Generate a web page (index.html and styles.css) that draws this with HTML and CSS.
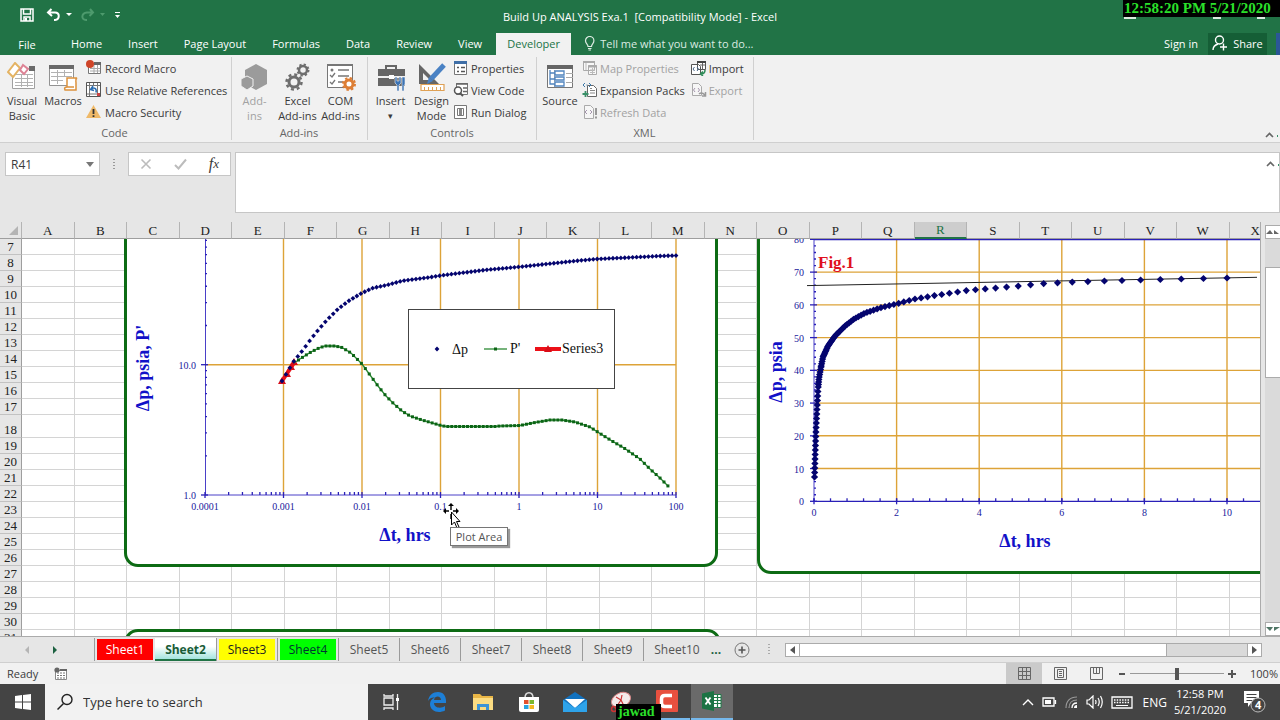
FILE: index.html
```html
<!DOCTYPE html>
<html lang="en">
<head>
<meta charset="utf-8">
<title>Build Up ANALYSIS Exa.1 - Excel</title>
<link rel="stylesheet" href="styles.css">
</head>
<body>
<header class="top">
  <div class="titlebar">
    <div class="quick">
      <button class="qbtn" aria-label="Save"><svg width="14" height="14" viewBox="0 0 14 14"><path fill="none" stroke="#fff" stroke-width="1.500" d="M1 1h12v12H1zM3.500 1v5h7V1M4 13V9h6v4"/><path fill="#fff" d="M5 10h2v3H5z"/></svg></button>
      <button class="qbtn undo" aria-label="Undo"><svg width="26" height="14" viewBox="0 0 26 14"><path fill="none" stroke="#fff" stroke-width="2" d="M5.500 1L2 4.500l4 3.500M2 4.500h7c5 0 5 7 0 7.500H8"/><path fill="#fff" d="M20 5h6l-3 3z"/></svg></button>
      <button class="qbtn redo" aria-label="Redo"><svg width="26" height="14" viewBox="0 0 26 14"><path fill="none" stroke="#4d9a6d" stroke-width="2" d="M10 1l3 3.500L9.500 8M13 4.500H7C1 5 1 12 6 12h1"/><path fill="#4d9a6d" d="M20 5h5l-2.500 3z"/></svg></button>
      <button class="qbtn" aria-label="Customize"><svg width="8" height="8" viewBox="0 0 8 8"><path fill="#fff" d="M1 1h5v1H1zM1 4h5L3.500 7z"/></svg></button>
    </div>
    <h1 class="title">Build Up ANALYSIS Exa.1&nbsp; [Compatibility Mode] - Excel</h1>
    <div class="winctl"><i></i><i></i><i></i></div>
  </div>
  <nav class="tabs">
    <button class="tab file">File</button>
    <button class="tab">Home</button>
    <button class="tab">Insert</button>
    <button class="tab">Page Layout</button>
    <button class="tab">Formulas</button>
    <button class="tab">Data</button>
    <button class="tab">Review</button>
    <button class="tab">View</button>
    <button class="tab active">Developer</button>
    <button class="tab tell"><svg width="12" height="15" viewBox="0 0 12 15"><path fill="none" stroke="#dcebe2" stroke-width="1.200" d="M4 10.500C4 8 1.500 7.500 1.500 4.700a4.200 4.200 0 0 1 8.400 0c0 2.800-2.400 3.300-2.400 5.800zM4 12.500h3.500M4.500 14h2.500"/></svg>Tell me what you want to do...</button>
    <span class="grow"></span>
    <button class="tab signin">Sign in</button>
    <button class="tab share"><svg width="16" height="16" viewBox="0 0 16 16"><g fill="none" stroke="#fff" stroke-width="1.400"><circle cx="7.500" cy="5" r="4"/><path d="M1 15c0-3 2-5 5-6M11.500 8.500v7M8 12h7"/></g></svg>Share</button>
    <i class="edge"></i>
  </nav>
</header>

<section class="ribbon">
  <div class="group code">
    <div class="tools">
      <button class="big"><svg width="30" height="30" viewBox="0 0 30 30"><path fill="#fff" stroke="#a0a0a0" d="M5.500 6.500h22v20h-22z"/><path fill="#6a6a6a" d="M22 4h6v5h-6z"/><path stroke="#b2b2b2" d="M8 12.500h18M8 16.500h18M8 20.500h18M8 23.500h18M14.500 12v13M20.500 12v13"/><path fill="#fff" stroke="#e4b363" stroke-width="2" d="M8 1l5 5-7 9-5-5z"/><path fill="#fff" stroke="#dd8396" stroke-width="2" d="M16 3l5 4-4 5-4-4z"/></svg><span>Visual<br>Basic</span></button>
      <button class="big"><svg width="30" height="30" viewBox="0 0 30 30"><path fill="#fff" stroke="#929292" d="M1.500 3.500h24v20h-24z"/><path fill="#6a6a6a" d="M1 3h25v4H1z"/><path stroke="#b2b2b2" d="M3 10.500h21M3 14.500h21M3 18.500h12M9.500 8v14M16.500 8v7"/><path fill="#fff" stroke="#dc913c" stroke-width="1.500" d="M19 16h10c-2 1-1 3-1 5v7H17c-1-2 0-3 2-3zM19 25h7"/></svg><span>Macros</span></button>
      <div class="stack">
        <button class="small"><svg width="16" height="16" viewBox="0 0 16 16"><path fill="#fff" stroke="#777" d="M2.500 3.500h12v10h-12z"/><path fill="#666" d="M8 2h7v3H8z"/><path stroke="#aaa" d="M4 8.500h10M4 11h10M8 5v8M11.500 5v8"/><circle cx="4" cy="4" r="4" fill="#cf4528"/></svg>Record Macro</button>
        <button class="small"><svg width="16" height="16" viewBox="0 0 16 16"><path fill="#fff" stroke="#555" d="M.5.500h14v14H.5z"/><path stroke="#777" d="M1 3.500h13M1 12h13M3.500 1v13M11.500 1v13M7.500 1v2"/><path fill="none" stroke="#2a6db2" stroke-width="1.500" d="M5 7.500c3-3 6-1 5 3M7 4L4.500 7.500 8 8.500"/><path fill="#c44" d="M11 11h3v3h-3z"/></svg>Use Relative References</button>
        <button class="small"><svg width="16" height="16" viewBox="0 0 16 16"><path fill="#efb968" d="M7.500 1L15 14H0z"/><path stroke="#333" stroke-width="1.800" d="M7.500 5v5M7.500 11.200V13"/></svg>Macro Security</button>
      </div>
    </div>
    <div class="caption">Code</div>
  </div>
  <div class="group addins">
    <div class="tools">
      <button class="big off" disabled><svg width="30" height="30" viewBox="0 0 30 30"><path fill="#9b9b9b" d="M16 2l11 6v14l-11 6-11-6V8z"/><path fill="#9b9b9b" stroke="#f1f1f1" d="M7 14l6 3v7l-6 4-6-4v-7z"/></svg><span>Add-<br>ins</span></button>
      <button class="big"><svg width="30" height="30" viewBox="0 0 30 30"><g fill="none" stroke="#6e6e6e"><circle cx="20" cy="8" r="4" stroke-width="2.500"/><circle cx="20" cy="8" r="5.500" stroke-width="2" stroke-dasharray="2.200 2.120"/><circle cx="11" cy="20" r="5" stroke-width="3"/><circle cx="11" cy="20" r="7.500" stroke-width="2.500" stroke-dasharray="3 2.890"/></g></svg><span>Excel<br>Add-ins</span></button>
      <button class="big"><svg width="30" height="30" viewBox="0 0 30 30"><path fill="#fff" stroke="#777" d="M1.500 2.500h25v23h-25z"/><path fill="#777" d="M1 2h26v2H1z"/><path fill="none" stroke="#777" stroke-width="1.300" d="M4 13l2 2 3-4M4 20l2 2 3-4M12 8h11M12 14h11M12 20h5"/><circle cx="6" cy="8" r="1.500" fill="#777"/><g fill="#fff" stroke="#dd7e35"><circle cx="23" cy="22" r="4" stroke-width="3"/><circle cx="23" cy="22" r="6" fill="none" stroke-width="2" stroke-dasharray="2.400 2.310"/></g></svg><span>COM<br>Add-ins</span></button>
    </div>
    <div class="caption">Add-ins</div>
  </div>
  <div class="group controls">
    <div class="tools">
      <button class="big"><svg width="30" height="30" viewBox="0 0 30 30"><path fill="none" stroke="#666" stroke-width="2" d="M10 7V4h10v3"/><path fill="#666" d="M2 7h27v7H2zM2 16h27v8H2z"/><path fill="#fff" d="M13 13h5v4h-5z"/><path fill="#3b73b4" stroke="#f1f1f1" stroke-width=".6" d="M19 15h2v4h2v-4h2v6l-2 2v6h-2v-6l-2-2zM26 15h3v8h-1v6h-2v-6z"/></svg><span>Insert<small>▾</small></span></button>
      <button class="big"><svg width="30" height="30" viewBox="0 0 30 30"><path fill="#666" fill-rule="evenodd" d="M2 2l20 20H2zM6 11v7h7z"/><path stroke="#4a82c4" stroke-width="5" d="M27 3L14 17"/><path fill="#4a82c4" d="M12 15l4 4-6 3z"/><path fill="#fff" stroke="#dfa155" stroke-width="1.200" d="M4 22.500h23v6H4z"/><path stroke="#dfa155" d="M7.500 25v3M11.500 25v3M15.500 25v3M19.500 25v3M23.500 25v3"/></svg><span>Design<br>Mode</span></button>
      <div class="stack">
        <button class="small"><svg width="16" height="16" viewBox="0 0 16 16"><path fill="#fff" stroke="#777" d="M1.500 1.500h12v13h-12z"/><path fill="#3f6fa7" d="M1 1h13v3H1z"/><path stroke="#555" stroke-width="1.500" d="M4 7.500h2M4 11.500h2M8 7.500h4M8 11.500h4"/></svg>Properties</button>
        <button class="small"><svg width="16" height="16" viewBox="0 0 16 16"><path fill="#fff" stroke="#777" d="M3.500 1.500h11v11h-11z"/><path stroke="#666" stroke-width="1.500" d="M3 2h12M10 6h4M10 9.500h4"/><circle cx="5" cy="8.500" r="3.500" fill="#fff" stroke="#555" stroke-width="1.500"/><path stroke="#555" stroke-width="2" d="M7 11l3 3"/></svg>View Code</button>
        <button class="small"><svg width="16" height="16" viewBox="0 0 16 16"><path fill="#fff" stroke="#777" d="M1.500 1.500h12v13h-12zM4.500 4.500h6v7h-6z"/><path fill="#888" d="M6 5h3v6H6z"/></svg>Run Dialog</button>
      </div>
    </div>
    <div class="caption">Controls</div>
  </div>
  <div class="group xml">
    <div class="tools">
      <button class="big"><svg width="30" height="30" viewBox="0 0 30 30"><path fill="#fff" stroke="#777" d="M2.500 3.500h25v22h-25z"/><path fill="#666" d="M2 3h26v4H2z"/><path stroke="#aaa" d="M21 11.500h7M21 15.500h7M21 20.500h7M9.500 8v17"/><path fill="#fff" stroke="#4f84bf" stroke-width="1.300" d="M5 8v14h5M5 11h5M5 17h5M10 9h9v4h-9zM10 15h9v3h-9zM10 20h9v4h-9z"/></svg><span>Source</span></button>
      <div class="stack">
        <button class="small off" disabled><svg width="16" height="16" viewBox="0 0 16 16"><path fill="#f8f8f8" stroke="#aaa" d="M1.500 1.500h11v9h-11zM6.500 5.500h8v9h-8z"/><path stroke="#aaa" stroke-width="2" d="M1 2h12M6 6.500h9"/><path stroke="#bbb" d="M8 10h5M8 12.500h5M10.500 8v6M4 3v7"/></svg>Map Properties</button>
        <button class="small"><svg width="16" height="16" viewBox="0 0 16 16"><path fill="#fff" stroke="#666" d="M5.500 3.500h6l3 3v8h-9z"/><path stroke="#888" d="M8 8.500h5M8 11h5M8 6.500h2"/><path fill="none" stroke="#3c78a8" d="M3 1L1 3l2 2M7 1l2 2-2 2M4.500 3h1"/><path stroke="#399068" stroke-width="1.800" d="M3.500 9v6M.5 12h6"/></svg>Expansion Packs</button>
        <button class="small off" disabled><svg width="16" height="16" viewBox="0 0 16 16"><path fill="#f6f6f6" stroke="#aaa" d="M2.500 1.500h6l3 3v10h-9z"/><path fill="none" stroke="#a595ad" d="M5 6L3 8l2 2M8 6l2 2-2 2"/><path stroke="#999" stroke-width="2" d="M14 4v7M14 12.500v2"/></svg>Refresh Data</button>
      </div>
      <div class="stack">
        <button class="small"><svg width="16" height="16" viewBox="0 0 16 16"><path fill="#fff" stroke="#555" d="M6.500 1.500h8v8h-8zM.5 4.500h7l2 2v8h-9z"/><path stroke="#444" stroke-width="2" d="M6 2h9"/><path stroke="#666" d="M9 5h5M11.500 3v6"/><path fill="none" stroke="#4b6a8d" d="M3.500 7L2 9l1.500 2M6 7l1.500 2L6 11"/><path fill="none" stroke="#2d8b57" stroke-width="1.500" d="M14 10c0 3-1 4-4 4M12 11.500L9.500 14l2.500 2"/></svg>Import</button>
        <button class="small off" disabled><svg width="16" height="16" viewBox="0 0 16 16"><path fill="#f6f6f6" stroke="#aaa" d="M1.500 1.500h6l3 3v9h-9z"/><path fill="none" stroke="#a595ad" d="M4 6L2.500 8 4 10M7 6l1.500 2L7 10"/><path fill="none" stroke="#999" stroke-width="1.500" d="M8 12c2-2 4-1 6 1M14.500 10v4H11"/></svg>Export</button>
      </div>
    </div>
    <div class="caption">XML</div>
  </div>
  <button class="collapse" aria-label="Collapse the ribbon"><svg width="13" height="8" viewBox="0 0 13 8"><path fill="none" stroke="#666" stroke-width="1.600" d="M1 6l3.500-3.500L8 6"/><path fill="#399068" d="M12 4h1v2h-1z"/></svg></button>
</section>

<section class="formula">
  <div class="namebox"><input aria-label="Name box" value="R41"><button aria-label="Names"><svg width="8" height="5" viewBox="0 0 8 5"><path fill="#777" d="M0 0h8L4 5z"/></svg></button></div>
  <svg class="grip" width="3" height="12" viewBox="0 0 3 12"><path fill="#999" d="M0 0h2v1H0zM0 3h2v1H0zM0 6h2v1H0zM0 9h2v1H0z"/></svg>
  <div class="fx">
    <button aria-label="Cancel"><svg width="12" height="12" viewBox="0 0 12 12"><path stroke="#bcbcbc" stroke-width="1.600" d="M1.500 1.500l9 9M10.500 1.500l-9 9"/></svg></button>
    <button aria-label="Enter"><svg width="13" height="12" viewBox="0 0 13 12"><path fill="none" stroke="#bcbcbc" stroke-width="2" d="M1 7l3.500 3.500L12 1.500"/></svg></button>
    <button class="fxl">f<sub>x</sub></button>
  </div>
  <textarea class="input" aria-label="Formula bar"></textarea>
  <button class="collapse fcol" aria-label="Collapse formula bar"><svg width="13" height="8" viewBox="0 0 13 8"><path fill="none" stroke="#666" stroke-width="1.600" d="M1 6l3.500-3.500L8 6"/><path fill="#399068" d="M12 4h1v2h-1z"/></svg></button>
</section>

<main class="work">
  <div class="sheet">
    <table class="grid"><thead><tr id="cols"></tr></thead><tbody id="rows"></tbody></table>
    <div class="drawing">
      <div class="chart c1"><svg id="loglog" width="588" height="382" viewBox="127 182 588 382"></svg></div>
      <div class="chart c2"><svg id="cart" width="594" height="389" viewBox="760 182 594 389"></svg></div>
      <div class="chart c3"></div>
      <svg class="cursor" width="20" height="30" viewBox="0 0 20 30"><path stroke="#000" stroke-width="1.400" d="M8 2v5M8 11v5M2 8h4M10 8h5"/><path d="M8 0l3 3H5zM0 8l3-3v6zM16 8l-3-3v6z"/><path fill="#fff" stroke="#000" d="M8.500 9v13l3-3 2.500 6 2-1-2.500-5.500H17z"/></svg>
      <div class="tip">Plot Area</div>
    </div>
  </div>
  <div class="vscroll">
    <button aria-label="Scroll up"><svg width="14" height="6" viewBox="0 0 14 6"><path fill="#666" d="M0 5l4-4 3 4zM8 1l5 4H8z"/></svg></button>
    <div class="vtrack"><div class="vthumb"></div></div>
    <button aria-label="Scroll down"><svg width="14" height="6" viewBox="0 0 14 6"><path fill="#4f7565" d="M0 1h7L4 5zM8 1h6L8 5z"/></svg></button>
  </div>
</main>

<div class="sheetbar">
  <div class="arrows"><button aria-label="Previous sheet"><svg width="5" height="8" viewBox="0 0 5 8"><path fill="#b5b5b5" d="M4 0v8L0 4z"/></svg></button><button aria-label="Next sheet"><svg width="5" height="8" viewBox="0 0 5 8"><path fill="#1c6141" d="M0 0v8l4-4z"/></svg></button></div>
  <button class="st red"><span>Sheet1</span></button>
  <button class="st cur"><span>Sheet2</span></button>
  <button class="st yellow"><span>Sheet3</span></button>
  <button class="st lime"><span>Sheet4</span></button>
  <button class="st"><span>Sheet5</span></button>
  <button class="st"><span>Sheet6</span></button>
  <button class="st"><span>Sheet7</span></button>
  <button class="st"><span>Sheet8</span></button>
  <button class="st"><span>Sheet9</span></button>
  <button class="st last"><span>Sheet10</span></button>
  <button class="more" aria-label="More sheets">...</button>
  <button class="add" aria-label="New sheet"><svg width="16" height="16" viewBox="0 0 16 16"><circle cx="8" cy="8" r="7" fill="none" stroke="#777"/><path stroke="#555" stroke-width="1.600" d="M8 4.500v7M4.500 8h7"/></svg></button>
  <svg class="grip" width="3" height="12" viewBox="0 0 3 12"><path fill="#aaa" d="M0 0h2v1H0zM0 3h2v1H0zM0 6h2v1H0zM0 9h2v1H0z"/></svg>
  <div class="hscroll">
    <button aria-label="Scroll left"><svg width="5" height="8" viewBox="0 0 5 8"><path fill="#555" d="M5 0v8L0 4z"/></svg></button>
    <div class="htrack"><div class="hthumb"></div></div>
    <button aria-label="Scroll right"><svg width="5" height="8" viewBox="0 0 5 8"><path fill="#555" d="M0 0v8l5-4z"/></svg></button>
  </div>
</div>

<div class="status">
  <span>Ready</span>
  <svg class="rec" width="13" height="13" viewBox="0 0 13 13"><path fill="#fff" stroke="#888" d="M1.500 3.500h11v9h-11z"/><path stroke="#777" stroke-dasharray="2 1" d="M3 6h9M3 8.500h9M3 11h9"/><path fill="#666" d="M6 2h7v2H6z"/><circle cx="3" cy="3" r="2.600" fill="#666"/></svg>
  <span class="grow"></span>
  <button class="view on" aria-label="Normal"><svg width="13" height="13" viewBox="0 0 13 13"><path fill="none" stroke="#666" d="M.5.500h12v12H.5zM4.500 0v13M8.500 0v13M0 4.500h13M0 8.500h13"/></svg></button>
  <button class="view" aria-label="Page layout"><svg width="13" height="13" viewBox="0 0 13 13"><path fill="none" stroke="#666" d="M.5.500h12v12H.5zM3.500 2.500h6v8h-6zM5 4.500h3M5 6.500h3M5 8.500h3"/></svg></button>
  <button class="view" aria-label="Page break"><svg width="13" height="13" viewBox="0 0 13 13"><path fill="none" stroke="#666" d="M.5.500h12v12H.5zM3.500 0v6.500h6V0M6.500 0v6"/></svg></button>
  <button class="zb" aria-label="Zoom out"><svg width="8" height="8" viewBox="0 0 8 8"><path stroke="#555" stroke-width="2" d="M1 4h6"/></svg></button>
  <input class="zoom" type="range" aria-label="Zoom" min="0" max="100" value="50">
  <button class="zb" aria-label="Zoom in"><svg width="8" height="8" viewBox="0 0 8 8"><path stroke="#555" stroke-width="2" d="M0 4h8M4 0v8"/></svg></button>
  <span class="pct">100%</span>
</div>

<footer class="taskbar">
  <button class="start" aria-label="Start"><svg width="16" height="16" viewBox="0 0 16 16"><path fill="#fff" d="M0 2l7-1v6.500H0zM8 1l8-1v7.500H8zM0 8.500h7V15l-7-1zM8 8.500h8V16l-8-1z"/></svg></button>
  <label class="search"><svg width="18" height="18" viewBox="0 0 18 18"><circle cx="11" cy="6.500" r="5" fill="none" stroke="#222" stroke-width="1.400"/><path stroke="#222" stroke-width="1.500" d="M7.500 10.500L1.500 16.500"/></svg><input type="text" aria-label="Search" placeholder="Type here to search"></label>
  <button class="app" aria-label="Task view"><svg width="18" height="18" viewBox="0 0 18 18"><path fill="none" stroke="#eee" stroke-width="1.300" d="M2 5h9v7H2zM2 1v2h9V1M2 17v-2h9v2M15.500 1v16"/><path fill="#fff" d="M14 5h3v3h-3z"/></svg></button>
  <button class="app" aria-label="Edge"><svg width="20" height="20" viewBox="0 0 20 20"><path fill="#1d7fd6" d="M1 9C2 3 6 0 11 0c6 0 8.500 5 8 11H7c0 5 7 6 11 3v4.500C11 22 3 19 3 12c0-3 2-5.500 5-6.500C4.500 5 2 7 1 9zm6-1h7c0-4-6-5-7 0z"/></svg></button>
  <button class="app" aria-label="File Explorer"><svg width="20" height="18" viewBox="0 0 20 18"><path fill="#e9b646" d="M0 1h7l2 2h11v14H0z"/><path fill="#fbdc82" d="M0 5h20v12H0z"/><path fill="#3d94d6" d="M4 17v-6h12v6h-3v-3H7v3z"/></svg></button>
  <button class="app" aria-label="Store"><svg width="20" height="22" viewBox="0 0 20 22"><path fill="none" stroke="#ddd" stroke-width="1.500" d="M6 7c0-7 8-7 8 0"/><path fill="#fff" d="M0 6h20v13q0 2-2 2H2q-2 0-2-2z"/><path fill="#e2512c" d="M5 9h4.500v4H5z"/><path fill="#7cb82f" d="M10.500 9H15v4h-4.500z"/><path fill="#29a3e0" d="M5 14h4.500v4H5z"/><path fill="#f5b921" d="M10.500 14H15v4h-4.500z"/></svg></button>
  <button class="app" aria-label="Mail"><svg width="24" height="22" viewBox="0 0 24 22"><path fill="#1272bf" d="M12 1l12 8v12H0V9z"/><path fill="#fff" d="M2 8h20l-10 9z"/><path fill="#2ea3ea" d="M0 9l12 8 12-8v12H0z"/></svg></button>
  <button class="app" aria-label="Snipping tool"><svg width="22" height="22" viewBox="0 0 22 22"><ellipse cx="11" cy="9" rx="10" ry="7" fill="#f4eaea" stroke="#d88" transform="rotate(-25 11 9)"/><path fill="none" stroke="#c33" stroke-width="1.200" d="M11 9L6 6M11 9l1-5M11 9l-6 9M11 9l4 8"/><circle cx="4" cy="18" r="2.500" fill="none" stroke="#c33" stroke-width="1.500"/></svg></button>
  <button class="app run" aria-label="Recorder"><svg width="22" height="22" viewBox="0 0 22 22"><rect width="22" height="22" rx="1" fill="#e8503f"/><path fill="none" stroke="#fff" stroke-width="3.500" d="M16 5.500H9q-3.500 0-3.500 3.500v4q0 3.500 3.500 3.500h7"/></svg></button>
  <button class="app run now" aria-label="Excel"><svg width="20" height="20" viewBox="0 0 20 20"><path fill="#fff" stroke="#1f7a48" d="M10 3.500h9v13h-9z"/><path stroke="#1f7a48" stroke-width="1.200" d="M11 6.500h8M11 9.500h8M11 12.500h8M15.500 4v12"/><path fill="#1c7344" d="M0 2.500L12 0v20L0 17.500z"/><path stroke="#fff" stroke-width="1.900" d="M3.500 6.500l5 7M8.500 6.500l-5 7"/></svg></button>
  <span class="grow"></span>
  <div class="tray">
    <svg width="12" height="8" viewBox="0 0 12 8"><path fill="none" stroke="#fff" stroke-width="1.400" d="M1 7l5-5 5 5"/></svg>
    <svg width="15" height="10" viewBox="0 0 15 10"><path fill="none" stroke="#fff" stroke-width="1.300" d="M1 1h11v8H1zM13.500 3v4"/><path fill="#fff" d="M3 3h6v4H3z"/></svg>
    <svg width="13" height="13" viewBox="0 0 13 13"><path fill="none" stroke="#999" stroke-width="1.200" d="M1 12C1 5 5 1 12 1M4 12c0-5 3-8 8-8"/><path fill="none" stroke="#fff" stroke-width="1.300" d="M7 12c0-3 2-5 5-5"/><path fill="#fff" d="M9 12q0-3 3-3v3z"/></svg>
    <svg width="17" height="14" viewBox="0 0 17 14"><path fill="none" stroke="#fff" stroke-width="1.200" d="M1 5h2l4-4v12L3 9H1zM9.500 5q1 2 0 4M12 3q2.500 4 0 8M14.500 1q3.500 6 0 12"/></svg>
    <svg width="22" height="13" viewBox="0 0 22 13"><path fill="none" stroke="#fff" stroke-width="1.300" d="M1 1h20v11H1z"/><path stroke="#fff" stroke-width="1.300" stroke-dasharray="1.500 1.200" d="M3 4h16M3 6.500h16"/><path stroke="#fff" d="M5 9.500h12"/></svg>
    <span class="eng">ENG</span>
    <div class="clock"><time>12:58 PM</time><time>5/21/2020</time></div>
    <svg class="note" width="24" height="24" viewBox="0 0 24 24"><path fill="#fff" d="M1 1h15v12h-8l-3 4v-4H1z"/><path stroke="#444" d="M3.500 4.500h10M3.500 7.500h10M3.500 10.500h6"/><circle cx="15" cy="15" r="7" fill="#444" stroke="#bbb"/><text x="12" y="19" class="badge">4</text></svg>
  </div>
</footer>
<div class="stamp">12:58:20 PM 5/21/2020</div>
<div class="mark">jawad</div>
<script src="script.js"></script>
</body>
</html>
```
FILE: styles.css
```css
* { box-sizing: border-box; }
body {
  margin: 0;
  height: 100vh;
  display: flex;
  flex-direction: column;
  overflow: hidden;
  position: relative;
  background: #e6e6e6;
  color: #3b3b3b;
  font: 12px/15px "Open Sans", "Noto Sans", sans-serif;
}
button, input, textarea { font: inherit; color: inherit; background: none; border: 0; padding: 0; margin: 0; outline: 0; }
button { display: flex; align-items: center; justify-content: center; white-space: nowrap; }
svg { display: block; flex: none; }
.grow { flex: 1; }

.top { background: #217346; color: #fff; flex: none; }
.titlebar { height: 33px; display: grid; grid-template-columns: 1fr auto 1fr; align-items: center; }
.quick { display: flex; align-items: center; gap: 8px; padding: 0 0 4px 20px; }
.undo { margin-left: 4px; }
.title { margin: 0; font-size: 11px; font-weight: 400; }
.winctl { display: flex; justify-content: flex-end; padding: 2px 15px 0 0; }
.winctl i { width: 12px; height: 2px; background: #dcebe2; }
.winctl i:nth-child(2) { width: 8px; margin-left: 77px; }
.winctl i:nth-child(3) { width: 8px; margin-left: 36px; }
.tabs { height: 22px; display: flex; padding: 0 0 0 11px; font-size: 11px; }
.tab { padding: 0 13px 2px; flex: none; }
.tab.file { width: 32px; padding: 0; margin-right: 15px; }
.tab.active { background: #f1f1f1; color: #217346; width: 75px; padding: 0 0 2px; margin-left: 1px; }
.tab.tell { gap: 4px; color: #dcebe2; }
.tab.signin { padding: 0 10px 2px; }
.tab.share { background: #155e36; width: 59px; padding: 0 0 2px; gap: 5px; }
.edge { width: 4px; flex: none; margin-left: 9px; background: #2b5797; }

.ribbon { flex: none; height: 88px; display: flex; background: #f1f1f1; border-bottom: 1px solid #cfcfcf; position: relative; font-size: 11px; padding: 2px 0; }
.group { display: flex; flex-direction: column; border-right: 1px solid #d0d0d0; }
.tools { flex: 1; display: flex; }
.caption { text-align: center; height: 15px; color: #666; margin-right: 2px; }
.big { width: 44px; flex-direction: column; justify-content: flex-start; padding-top: 5px; gap: 1px; line-height: 15px; text-align: center; }
.big small { display: block; font-size: 9px; }
.off { color: #a2a2a2; }
.stack { display: flex; flex-direction: column; }
.small { height: 22px; gap: 3px; justify-content: flex-start; }
.code .big:nth-child(2) { width: 38px; }
.code { width: 232px; }
.code .stack { padding-left: 4px; }
.addins { width: 136px; padding-left: 1px; }
.addins .big { width: 43px; }
.controls { width: 169px; padding-left: 2px; }
.controls .big { width: 41px; }
.controls .stack { padding-left: 1px; }
.controls .small { gap: 2px; }
.xml { width: 217px; padding-left: 1px; }
.xml .small { gap: 2px; }
.xml .stack + .stack { padding-left: 6px; }
.collapse { position: absolute; right: 2px; bottom: 3px; }

.formula { flex: none; height: 79px; display: flex; align-items: flex-start; padding: 9px 0 9px 5px; position: relative; }
.namebox { width: 95px; height: 24px; display: flex; background: #fff; border: 1px solid #c6c6c6; padding: 0 5px; }
.namebox input { flex: 1; min-width: 0; font-size: 12px; }
.grip { margin: 7px 12px 0 13px; }
.fx { width: 103px; height: 24px; display: flex; justify-content: space-around; background: #fff; border: 1px solid #c6c6c6; margin-right: 4px; }
.fxl { font: italic 16px "Liberation Serif", serif; }
.fxl sub { font-size: 13px; }
.input { flex: 1; align-self: stretch; background: #fff; border: 1px solid #c6c6c6; resize: none; }
.fcol { top: 17px; bottom: auto; right: 1px; }

.work { flex: 1; min-height: 0; display: flex; border-bottom: 1px solid #ababab; }
.sheet { flex: 1; min-width: 0; position: relative; overflow: hidden; background: #fff; border-right: 1px solid #ababab; }
.grid { width: 1282px; table-layout: fixed; border-collapse: separate; border-spacing: 0; font: 13px/14px "Liberation Serif", serif; color: #222; }
.grid th { font-weight: 400; padding: 0; background: #e6e6e6; }
.grid thead th { height: 17px; vertical-align: bottom; border-right: 1px solid #b4b4b4; border-bottom: 1px solid #9e9e9e; }
.grid thead th:first-child { width: 22px; }
.grid thead svg { margin: 0 0 3px 9px; }
.grid thead th.sel { background: #cdcdcd; color: #217346; border-bottom: 2px solid #217346; }
.grid tbody th { height: 16px; border-right: 1px solid #9e9e9e; border-bottom: 1px solid #c2c2c2; vertical-align: bottom; }
.grid td { padding: 0; border-right: 1px solid #d4d4d4; border-bottom: 1px solid #d4d4d4; }
.grid .tall th { height: 23px; }
.drawing { position: absolute; left: 22px; top: 17px; right: 0; bottom: 0; overflow: hidden; }
.chart { position: absolute; background: #fff; border: 3px solid #0d6b14; border-radius: 14px; }
.c1 { left: 102px; top: -60px; width: 594px; height: 388px; }
.c2 { left: 735px; top: -60px; width: 600px; height: 395px; }
.c3 { left: 102px; top: 390px; width: 597px; height: 200px; }
.tip { position: absolute; left: 428px; top: 288px; width: 58px; height: 19px; display: flex; align-items: center; justify-content: center; white-space: nowrap; background: #fff; border: 1px solid #767676; box-shadow: 2px 2px 1px #999; font-size: 11px; color: #555; }
.cursor { position: absolute; left: 421px; top: 264px; }

.axis { stroke: #4a40c8; stroke-width: 1; fill: none; }
.axis.strong { stroke: #2a20b8; stroke-width: 1.3; }
.gridline { stroke: #dda338; stroke-width: 1.4; fill: none; }
.num { font: 10px "Liberation Serif", serif; fill: #1a1a9c; }
.name { font: bold 18px "Liberation Serif", serif; fill: #1111c8; text-anchor: middle; }
.fig { font: bold 17px "Liberation Serif", serif; fill: #e01020; }
.mid { text-anchor: middle; }
.end { text-anchor: end; }
.leg { font: 14px "Liberation Serif", serif; fill: #111; }
.dp { fill: #04046e; }
.pp { fill: #0b6415; }
.ppline { stroke: #2c8a34; stroke-width: 1.3; fill: none; }
.s3 { stroke: #ec1018; stroke-width: 4; fill: none; }
.tri { fill: #d80d18; }
.trend { stroke: #222; stroke-width: 1; }
.legbox { fill: #fff; stroke: #444; }

.vscroll { width: 19px; flex: none; display: flex; flex-direction: column; padding: 3px 0 0 4px; background: #e6e6e6; }
.vscroll button { height: 14px; background: #fff; border: 1px solid #ababab; border-right: 0; overflow: hidden; }
.vtrack { flex: 1; background: #dadada; padding-top: 28px; }
.vthumb { height: 111px; background: #fff; border: 1px solid #ababab; border-right: 0; }

.sheetbar { flex: none; height: 26px; display: flex; align-items: center; padding: 0 18px 0 0; border-bottom: 1px solid #cfcfcf; font-size: 12px; color: #555; }
.arrows { width: 94px; display: flex; gap: 23px; padding-left: 25px; }
.st { width: 61px; height: 23px; border-left: 1px solid #9a9a9a; padding: 1px 2px; margin-bottom: 1px; }
.st span { flex: 1; height: 21px; line-height: 21px; }
.red span { background: #f00; color: #fff; }
.cur { padding: 0; border: 0; border-bottom: 2px solid #217346; }
.cur span { background: linear-gradient(#fff 40%, #a4e4de); color: #185c37; font-weight: 700; line-height: 23px; }
.yellow span { background: #ff0; color: #222; }
.lime span { background: #0f0; color: #033; }
.last { width: 67px; }
.more { width: 12px; color: #1c6141; font-weight: 700; }
.add { margin-left: 12px; }
.sheetbar .grip { margin: 0 14px 0 18px; }
.hscroll { flex: 1; height: 14px; display: flex; border: 1px solid #ababab; background: #dadada; }
.hscroll button { width: 13px; background: #fff; }
.htrack { flex: 1; border: solid #ababab; border-width: 0 1px; }
.hthumb { width: 82%; height: 100%; background: #fff; border-right: 1px solid #ababab; }

.status { flex: none; height: 21px; display: flex; align-items: center; background: #f1f1f1; padding: 0 2px 0 7px; font-size: 11px; }
.rec { margin-left: 16px; }
.view { width: 36px; height: 21px; }
.view.on { background: #cacaca; }
.zb { margin: 0 4px; }
.zoom { appearance: none; width: 94px; height: 13px; background: linear-gradient(#999, #999) center / 100% 1px no-repeat; }
.zoom::-webkit-slider-thumb { appearance: none; width: 4px; height: 12px; background: #555; }
.pct { margin-left: 10px; white-space: nowrap; }

.taskbar { flex: none; height: 36px; display: flex; background: #444; color: #fff; }
.start { width: 45px; }
.search { width: 323px; display: flex; align-items: center; gap: 9px; padding-left: 11px; background: #f2f2f2; color: #333; }
.search input { flex: 1; min-width: 0; font-size: 13px; }
.search input::placeholder { color: #333; opacity: 1; }
.app { width: 46px; }
.app.run { border-bottom: 2px solid #76b9ed; }
.app.now { background: #6a6a6a; width: 42px; margin-left: 1px; }
.tray { display: flex; align-items: center; gap: 8px; padding-right: 13px; font-size: 12px; }
.eng { margin-left: 2px; }
.clock { width: 50px; display: flex; flex-direction: column; align-items: center; line-height: 16px; font-size: 11px; }
.note { margin-left: 10px; }
.badge { font: bold 11px "Open Sans", sans-serif; fill: #fff; }

.stamp { position: absolute; top: 0; right: 0; width: 157px; height: 17px; padding-left: 1px; background: #000; color: #2be02b; font: bold 15px/17px "Liberation Serif", serif; white-space: nowrap; }
.mark { position: absolute; left: 616px; bottom: 0; width: 45px; height: 16px; background: #000; color: #2be02b; font: bold 14px/16px "Liberation Serif", serif; padding-left: 2px; }
```
FILE: script.js
```js
// Worksheet headers and cells
const letters = "ABCDEFGHIJKLMNOPQRSTUVWX".split("");
document.getElementById("cols").innerHTML =
  '<th><svg width="9" height="9" viewBox="0 0 9 9"><path fill="#b4b4b4" d="M9 0v9H0z"/></svg></th>' +
  letters.map(c => `<th${c === "R" ? ' class="sel"' : ""}>${c}</th>`).join("");
let rows = "";
for (let r = 7; r <= 31; r++) {
  rows += `<tr${r === 18 ? ' class="tall"' : ""}><th>${r}</th>${"<td></td>".repeat(letters.length)}</tr>`;
}
document.getElementById("rows").innerHTML = rows;

// Drawing helpers
const line = (x1, y1, x2, y2, c) => `<line x1="${x1}" y1="${y1}" x2="${x2}" y2="${y2}" class="${c}"/>`;
const text = (x, y, c, s) => `<text x="${x}" y="${y}" class="${c}">${s}</text>`;
const diamond = (x, y, r) => `<path class="dp" d="M${x - r} ${y}L${x} ${y - r}L${x + r} ${y}L${x} ${y + r}z"/>`;
const tri = (x, y) => `<path class="tri" d="M${x - 4} ${y + 3}L${x} ${y - 4}L${x + 4} ${y + 3}z"/>`;
function yAt(pts, x) {
  for (let i = 1; i < pts.length; i++) {
    const [a, b] = pts[i - 1], [c, d] = pts[i];
    if (x <= c) return b + (d - b) * (x - a) / (c - a);
  }
  return pts[pts.length - 1][1];
}

// Log-log chart
const X0 = 205, DX = 78.5, Y0 = 495, DY = 130.3;
let s = "";
for (let i = 1; i <= 6; i++) s += line(X0 + i * DX, 182, X0 + i * DX, Y0, "gridline");
s += line(X0, Y0 - DY, X0 + 6 * DX, Y0 - DY, "gridline");
s += line(X0 + .5, 182, X0 + .5, Y0, "axis") + line(X0, Y0, X0 + 6 * DX, Y0, "axis");
["0.0001", "0.001", "0.01", "0.1", "1", "10", "100"].forEach((t, i) => {
  const x = X0 + i * DX;
  s += line(x, Y0 - 3, x, Y0 + 3, "axis strong") + text(x, 510, "num mid", t);
  if (i < 6) for (let k = 2; k < 10; k++) {
    const m = x + DX * Math.log10(k);
    s += line(m, Y0 - 3, m, Y0, "axis strong");
  }
});
for (let i = 0; i < 2; i++) {
  const y = Y0 - i * DY;
  s += line(X0 - 4, y, X0 + 3, y, "axis strong") + text(196, y + 4, "num end", i ? "10.0" : "1.0");
  for (let k = 2; k < 10; k++) {
    const m = y - DY * Math.log10(k);
    s += line(X0, m, X0 + 2, m, "axis strong");
  }
}
const dp = [[282,381],[294,361],[303,350],[311,339],[319,329],[327,320],[338,309],[350,300],[362,293],[373,288],[387,285],[403,280.7],[430,277.3],[441,275.5],[485,270],[518,267],[547,264],[580,260.5],[597,259],[630,257.5],[660,256],[677,255.5]];
const pp = [[294,363],[303,357],[311,352],[319,348],[325,346],[335,346],[342,347.5],[351,353],[362,364],[370,375],[378,386],[386,396],[394,404],[402,411],[410,416],[422,420],[441,425.5],[446,426.5],[495,426.5],[500,426],[520,425.5],[535,422.5],[550,420],[562,420],[575,422],[590,427],[600,433.5],[612,441],[624,448],[640,459],[650,469],[660,478],[668,486]];
s += line(282, 381, 294, 363, "s3") + tri(282, 381) + tri(287, 374) + tri(291, 367) + tri(294, 362);
s += `<polyline class="ppline" points="${pp.join(" ")}"/>`;
for (let x = 298.5; x <= 669; x += 3.93) s += `<rect class="pp" x="${x - 1.5}" y="${yAt(pp, x) - 1.5}" width="3" height="3"/>`;
for (let x = 282; x <= 678; x += 3.94) s += diamond(x, yAt(dp, x), 2.4);
s += '<rect class="legbox" x="408.500" y="309.500" width="206" height="79"/>';
s += diamond(437, 349, 2.4) + text(452, 354, "leg", "Δp");
s += line(484, 349, 507, 349, "ppline") + '<rect class="pp" x="494" y="347.500" width="3" height="3"/>' + text(510, 353, "leg", "P'");
s += line(535, 349, 561, 349, "s3") + tri(548, 349) + text(562, 353, "leg", "Series3");
s += text(405, 541, "name", "Δt, hrs") + '<text class="name" transform="translate(149 368) rotate(-90)">Δp, psia, P\'</text>';
document.getElementById("loglog").innerHTML = s;

// Cartesian chart
const CX = 814, UX = 41.3, CY = 501.3, UY = 3.274;
s = "";
for (let v = 10; v < 80; v += 10) s += line(CX, CY - v * UY, 1300, CY - v * UY, "gridline");
for (let v = 2; v <= 10; v += 2) s += line(CX + v * UX, 240, CX + v * UX, CY, "gridline");
s += line(CX, 239.5, 1300, 239.5, "axis strong") + line(CX, 239, CX, CY, "axis") + line(CX, CY, 1300, CY, "axis strong");
for (let v = 0; v <= 80; v += 2) {
  const y = CY - v * UY, major = v % 10 === 0;
  s += line(major ? CX - 4 : CX, y, major ? CX + 3 : CX + 2, y, "axis strong");
  if (major) s += text(804, y + 4, "num end", v);
}
for (let v = 0; v <= 10.8; v += .4) s += line(CX + v * UX, CY - 3, CX + v * UX, CY, "axis strong");
for (let v = 0; v <= 10; v += 2) s += line(CX + v * UX, CY - 3, CX + v * UX, CY + 3, "axis strong") + text(CX + v * UX, 516, "num mid", v);
s += line(807, 285.6, 1257, 277.3, "trend");
const curve = [[821,367],[823,357],[828,346],[835,336],[845,326],[854,319],[865,313],[883,307],[896,304],[915,299],[932,296],[967,290.5],[996,288],[1019,286],[1044,283.5],[1073,282],[1105,281],[1140,280],[1181,279],[1227,278]];
for (let d = 413; d > 7; d *= .943) s += diamond(CX + d, yAt(curve, CX + d), 3.6);
const steep = [[367,821],[378,819],[390,818],[410,817],[430,816],[460,815],[478,814.5]];
for (let y = 367; y < 478; y += y < 385 ? 2.5 : 4.5) s += diamond(yAt(steep, y), y, 3.6);
s += text(818, 268, "fig", "Fig.1") + text(1025, 547, "name", "Δt, hrs");
s += '<text class="name" transform="translate(782 372) rotate(-90)">Δp, psia</text>';
document.getElementById("cart").innerHTML = s;
```
